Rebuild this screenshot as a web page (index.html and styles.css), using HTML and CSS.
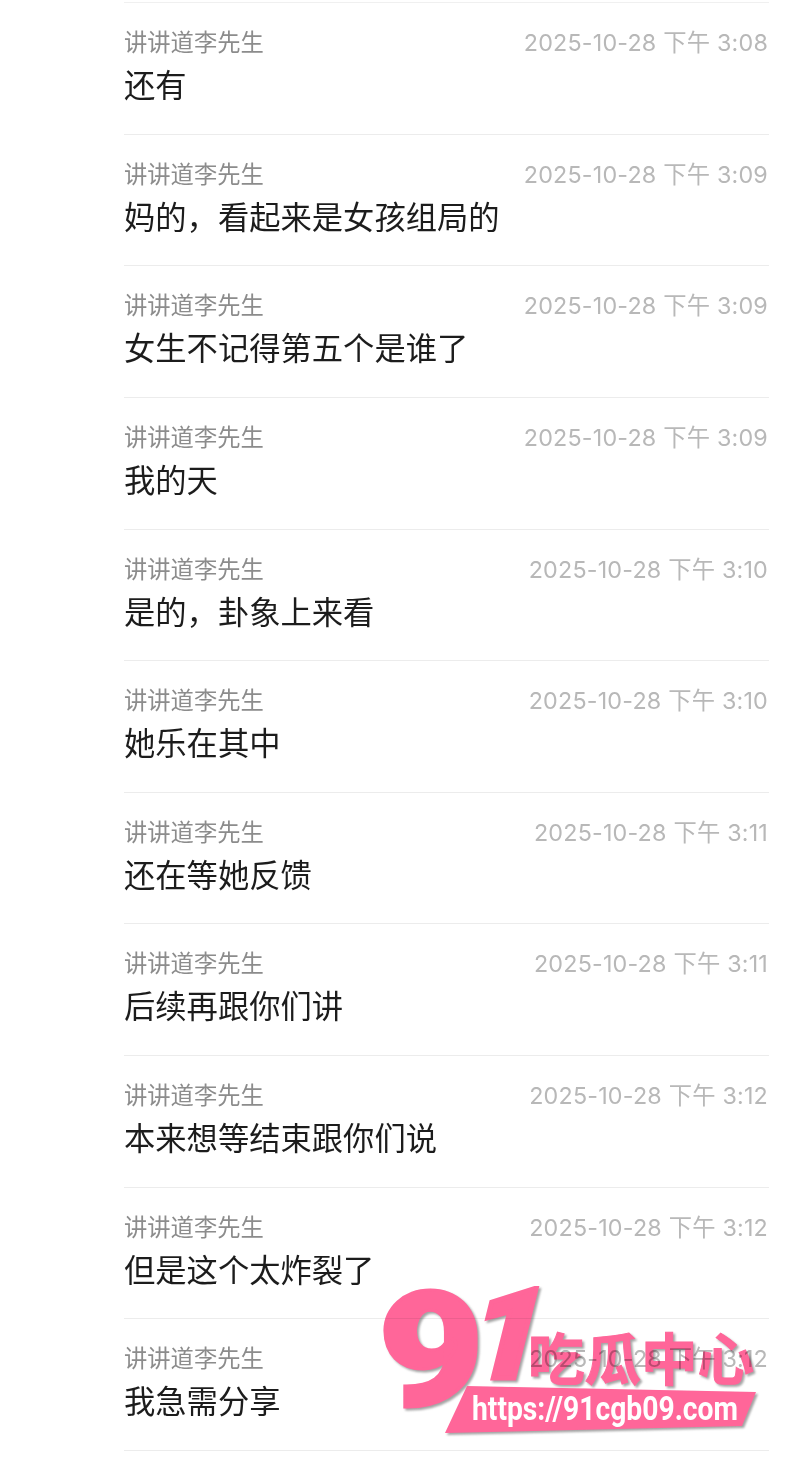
FILE: index.html
```html
<!DOCTYPE html>
<html lang="zh-CN">
<head>
  <meta charset="UTF-8">
  <title>聊天记录</title>
  <link rel="stylesheet" href="styles.css">
</head>
<body>
  <ul class="messages">
    <li class="message"><div class="meta"><span class="name">讲讲道李先生</span><time class="time">2025-10-28 下午 3:08</time></div><p class="text">还有</p></li>
    <li class="message"><div class="meta"><span class="name">讲讲道李先生</span><time class="time">2025-10-28 下午 3:09</time></div><p class="text">妈的，看起来是女孩组局的</p></li>
    <li class="message"><div class="meta"><span class="name">讲讲道李先生</span><time class="time">2025-10-28 下午 3:09</time></div><p class="text">女生不记得第五个是谁了</p></li>
    <li class="message"><div class="meta"><span class="name">讲讲道李先生</span><time class="time">2025-10-28 下午 3:09</time></div><p class="text">我的天</p></li>
    <li class="message"><div class="meta"><span class="name">讲讲道李先生</span><time class="time">2025-10-28 下午 3:10</time></div><p class="text">是的，卦象上来看</p></li>
    <li class="message"><div class="meta"><span class="name">讲讲道李先生</span><time class="time">2025-10-28 下午 3:10</time></div><p class="text">她乐在其中</p></li>
    <li class="message"><div class="meta"><span class="name">讲讲道李先生</span><time class="time">2025-10-28 下午 3:11</time></div><p class="text">还在等她反馈</p></li>
    <li class="message"><div class="meta"><span class="name">讲讲道李先生</span><time class="time">2025-10-28 下午 3:11</time></div><p class="text">后续再跟你们讲</p></li>
    <li class="message"><div class="meta"><span class="name">讲讲道李先生</span><time class="time">2025-10-28 下午 3:12</time></div><p class="text">本来想等结束跟你们说</p></li>
    <li class="message"><div class="meta"><span class="name">讲讲道李先生</span><time class="time">2025-10-28 下午 3:12</time></div><p class="text">但是这个太炸裂了</p></li>
    <li class="message"><div class="meta"><span class="name">讲讲道李先生</span><time class="time">2025-10-28 下午 3:12</time></div><p class="text">我急需分享</p></li>
  </ul>

  <svg class="watermark" viewBox="370 1230 430 229" width="430" height="229">
    <g class="wm-art">
      <text class="wm-nine" x="378" y="1405" textLength="106" lengthAdjust="spacingAndGlyphs">9</text>
      <text class="wm-one" x="462" y="1378" transform="skewX(-14)" dx="344">1</text>
      <text class="wm-title" x="528" y="1380" textLength="226" lengthAdjust="spacingAndGlyphs">吃瓜中心</text>
      <polygon class="wm-banner" points="467,1386 756,1392 742,1426 445,1433"/>
    </g>
    <text class="wm-url" x="472" y="1420" textLength="266" lengthAdjust="spacingAndGlyphs">https://91cgb09.com</text>
  </svg>
</body>
</html>
```

FILE: styles.css
```css
body {
  margin: 0;
  background: #fff;
  height: 1459px;
  overflow: hidden;
  position: relative;
  font-family: "Inter", "Noto Sans CJK SC", sans-serif;
}
.messages {
  list-style: none;
  margin: 2px 31px 0 124px;
  padding: 0;
  border-top: 1px solid #f0f0f0;
}
.message {
  box-sizing: border-box;
  height: 131.64px;
  padding-top: 20px;
  border-bottom: 1px solid #ececec;
}
.meta {
  display: flex;
  justify-content: space-between;
  align-items: baseline;
  padding-right: 1px;
  height: 36px;
}
.name {
  font-family: "Noto Sans CJK SC", sans-serif;
  font-size: 23.3px;
  line-height: 36px;
  color: #8c8c8c;
}
.time {
  font-family: "Inter", "Noto Sans CJK SC", sans-serif;
  font-size: 23.3px;
  letter-spacing: 0.2px;
  line-height: 36px;
  color: #b8b8b8;
}
.text {
  margin: 3px 0 0;
  font-family: "Noto Sans CJK SC", sans-serif;
  font-size: 31.3px;
  line-height: 44px;
  color: #1c1c1c;
}

/* watermark sits over the last rows */
.watermark {
  position: absolute;
  left: 370px;
  top: 1230px;
  mix-blend-mode: multiply;
}
.wm-art {
  fill: #ff6699;
  filter: drop-shadow(2px 2px 1px rgba(90, 90, 90, 0.55));
}
.wm-nine {
  font-family: "Roboto", sans-serif;
  font-weight: 900;
  font-size: 160px;
  stroke: #ff6699;
  stroke-width: 3px;
}
.wm-one {
  font-family: "Roboto", sans-serif;
  font-weight: 900;
  font-size: 126px;
  stroke: #ff6699;
  stroke-width: 5px;
}
.wm-title {
  font-family: "Noto Sans CJK SC", sans-serif;
  font-weight: 700;
  font-size: 56px;
  stroke: #ff6699;
  stroke-width: 1px;
}
.wm-url {
  font-family: "Roboto", "Liberation Sans", sans-serif;
  font-weight: 700;
  font-size: 33px;
  fill: #fff;
}
```
